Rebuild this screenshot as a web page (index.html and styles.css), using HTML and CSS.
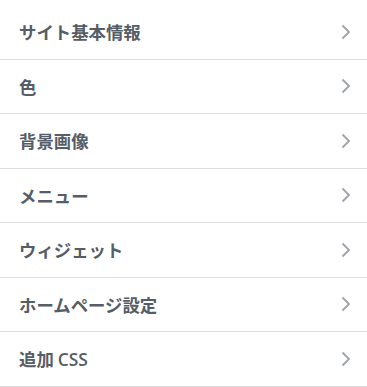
FILE: index.html
```html
<!DOCTYPE html>
<html lang="ja">
<head>
<meta charset="utf-8">
<link rel="stylesheet" href="styles.css">
</head>
<body>
<ul class="panel">
  <li class="row"><span class="label">サイト基本情報</span><svg class="chev" viewBox="0 0 10 16"><path d="M1.5 1.5 L8 8 L1.5 14.5"/></svg></li>
  <li class="row"><span class="label">色</span><svg class="chev" viewBox="0 0 10 16"><path d="M1.5 1.5 L8 8 L1.5 14.5"/></svg></li>
  <li class="row"><span class="label">背景画像</span><svg class="chev" viewBox="0 0 10 16"><path d="M1.5 1.5 L8 8 L1.5 14.5"/></svg></li>
  <li class="row"><span class="label">メニュー</span><svg class="chev" viewBox="0 0 10 16"><path d="M1.5 1.5 L8 8 L1.5 14.5"/></svg></li>
  <li class="row"><span class="label">ウィジェット</span><svg class="chev" viewBox="0 0 10 16"><path d="M1.5 1.5 L8 8 L1.5 14.5"/></svg></li>
  <li class="row"><span class="label">ホームページ設定</span><svg class="chev" viewBox="0 0 10 16"><path d="M1.5 1.5 L8 8 L1.5 14.5"/></svg></li>
  <li class="row"><span class="label">追加 <span class="latin">CSS</span></span><svg class="chev" viewBox="0 0 10 16"><path d="M1.5 1.5 L8 8 L1.5 14.5"/></svg></li>
</ul>
</body>
</html>
```

FILE: styles.css
```css
html, body {
  margin: 0;
  padding: 0;
  background: #fff;
}
.panel {
  list-style: none;
  margin: 0;
  padding: 5px 0 0 0;
  width: 367px;
}
.row {
  display: flex;
  align-items: center;
  justify-content: space-between;
  height: 53.5px;
  border-bottom: 1px solid #dddddd;
  padding: 0 16px 0 19px;
  box-sizing: content-box;
  width: calc(367px - 35px);
}
.label {
  font-family: "Noto Sans CJK JP", "Open Sans", sans-serif;
  font-weight: 700;
  font-size: 17.4px;
  color: #555d66;
  line-height: 1;
}
.latin {
  font-family: "Open Sans", sans-serif;
  font-weight: 600;
}
.chev {
  width: 10px;
  height: 16px;
  fill: none;
  stroke: #a0a5aa;
  stroke-width: 1.9;
}
```
